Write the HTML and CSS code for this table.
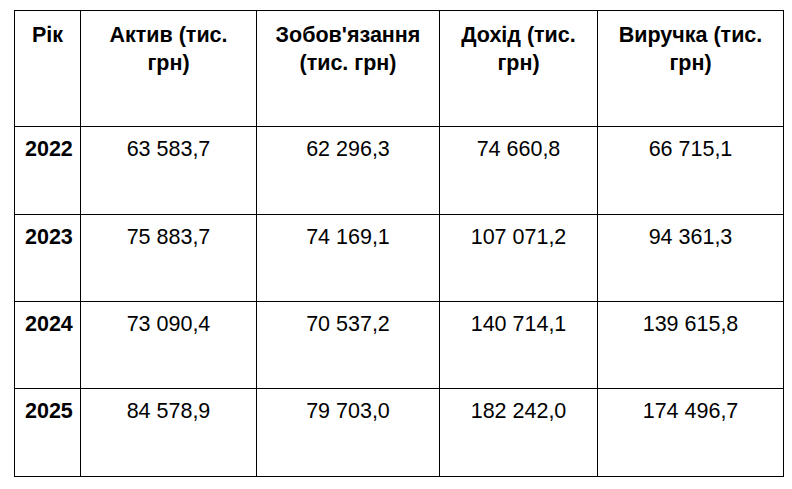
FILE: index.html
```html
<!DOCTYPE html>
<html lang="uk">
<head>
<meta charset="UTF-8">
<meta name="viewport" content="width=device-width, initial-scale=1.0">
<title>Фінансові показники</title>
<link rel="stylesheet" href="styles.css">
</head>
<body>
<table class="tabela">
    <colgroup>
        <col class="col-rik">
        <col class="col-aktyv">
        <col class="col-zobov">
        <col class="col-dokhid">
        <col class="col-vyruchka">
    </colgroup>
    <thead>
        <tr class="linha-cabecalho">
            <th>Рік</th>
            <th>Актив (тис. грн)</th>
            <th>Зобов'язання (тис. грн)</th>
            <th>Дохід (тис. грн)</th>
            <th>Виручка (тис. грн)</th>
        </tr>
    </thead>
    <tbody>
        <tr class="linha-dados">
            <td class="ano">2022</td>
            <td>63 583,7</td>
            <td>62 296,3</td>
            <td>74 660,8</td>
            <td>66 715,1</td>
        </tr>
        <tr class="linha-dados linha-curta">
            <td class="ano">2023</td>
            <td>75 883,7</td>
            <td>74 169,1</td>
            <td>107 071,2</td>
            <td>94 361,3</td>
        </tr>
        <tr class="linha-dados linha-curta">
            <td class="ano">2024</td>
            <td>73 090,4</td>
            <td>70 537,2</td>
            <td>140 714,1</td>
            <td>139 615,8</td>
        </tr>
        <tr class="linha-dados">
            <td class="ano">2025</td>
            <td>84 578,9</td>
            <td>79 703,0</td>
            <td>182 242,0</td>
            <td>174 496,7</td>
        </tr>
    </tbody>
</table>
</body>
</html>
```

FILE: styles.css
```css
body {
    margin: 0;
    padding: 10px 0 0 14px;
    font-family: "Liberation Sans", Arial, sans-serif;
    background-color: #ffffff;
    color: #000000;
}

.tabela {
    border-collapse: collapse;
    table-layout: fixed;
    width: 769px;
    font-size: 21.5px;
    line-height: 28px;
}

.col-rik { width: 66px; }
.col-aktyv { width: 176px; }
.col-zobov { width: 183px; }
.col-dokhid { width: 158px; }
.col-vyruchka { width: 186px; }

.tabela th,
.tabela td {
    border: 1px solid #000000;
    text-align: center;
    vertical-align: top;
    padding: 10px 10px 0 10px;
}

.tabela th {
    font-weight: bold;
}

.linha-cabecalho {
    height: 116px;
}

.linha-dados {
    height: 88px;
}

.linha-curta {
    height: 87px;
}

.linha-dados td {
    padding-top: 8px;
}

.ano {
    font-weight: bold;
}
```
